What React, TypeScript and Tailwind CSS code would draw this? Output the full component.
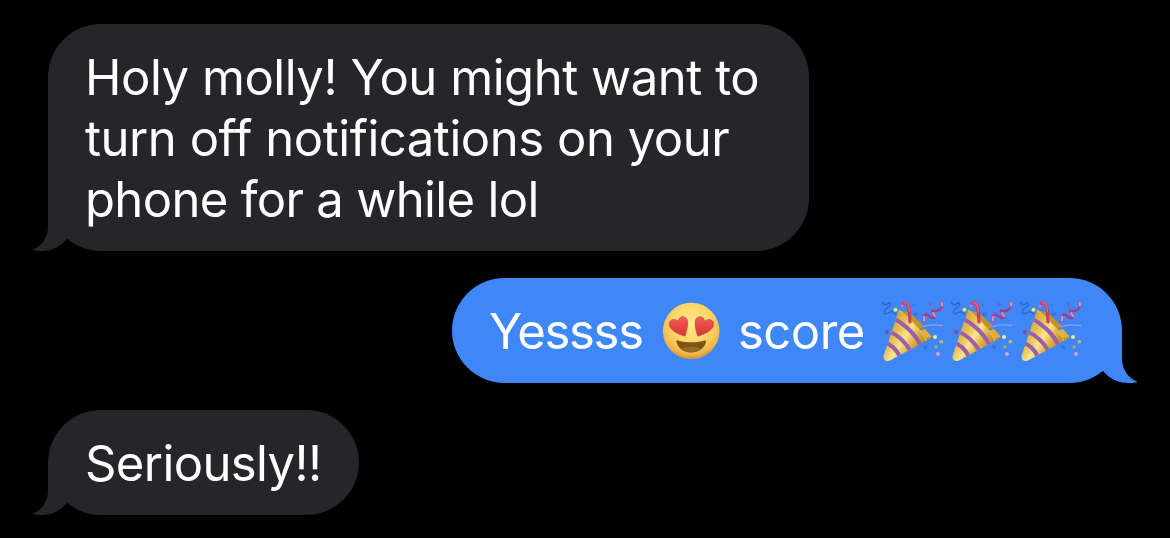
import type { ReactNode } from "react";
import clsx from "clsx";

function Tail({ className }: { className: string }) {
  return (
    <svg
      viewBox="0 0 36 54"
      className={clsx("absolute bottom-0 h-[54px] w-9 fill-current", className)}
    >
      <path d="M16 0V29C16 38 12.500 47.500 .5 52.900C4 54 10 54.200 16 53.400C24 52 30 47.500 35 42L36 0Z" />
    </svg>
  );
}

function HeartEyes() {
  return (
    <svg viewBox="0 0 58 58" className="h-[58px] w-[58px] shrink-0">
      <defs>
        <radialGradient id="face" cx="50%" cy="36%" r="65%">
          <stop offset="0" stopColor="#ffe98a" />
          <stop offset="0.55" stopColor="#fdd564" />
          <stop offset="0.86" stopColor="#f0b44a" />
          <stop offset="1" stopColor="#c48a3c" />
        </radialGradient>
        <linearGradient id="heart" x1="0" y1="0" x2="0" y2="1">
          <stop offset="0" stopColor="#f25f59" />
          <stop offset="1" stopColor="#d7322f" />
        </linearGradient>
      </defs>
      <circle cx="29.200" cy="29" r="28.300" fill="url(#face)" />
      <g fill="url(#heart)" stroke="#b9473a" strokeWidth="0.6">
        <path d="M23 34.200C18 32.800 8.800 29 7.300 23.500C5.800 18 12.500 15.500 16.300 19.500C16.300 13.500 24.500 12.800 25.500 19C26.200 24 24.500 30 23 34.200Z" />
        <path d="M35.800 34.200C40.800 32.800 50 29 51.500 23.500C53 18 46.300 15.500 42.500 19.500C42.500 13.500 34.300 12.800 33.300 19C32.600 24 34.300 30 35.800 34.200Z" />
      </g>
      <path
        d="M14.400 40C13.700 38 15.200 38.500 17.200 38.900C24.700 40.700 33.700 40.700 41.200 38.900C43.200 38.500 44.700 38 44 40C42.200 46.500 36.200 50.500 29.200 50.500S16.200 46.500 14.400 40Z"
        fill="#7c5517"
      />
      <path d="M20 47C25 44 33.500 44 38.500 47C33.500 51 25 51 20 47Z" fill="#946b25" />
    </svg>
  );
}

function PartyPopper() {
  return (
    <svg viewBox="0 0 66 66" className="h-[66px] w-[66px] shrink-0">
      <defs>
        <linearGradient id="cone" x1="6" y1="30" x2="40" y2="52" gradientUnits="userSpaceOnUse">
          <stop offset="0" stopColor="#cda23a" />
          <stop offset="0.3" stopColor="#e6c253" />
          <stop offset="0.52" stopColor="#fae58e" />
          <stop offset="0.75" stopColor="#dcae3e" />
          <stop offset="1" stopColor="#b98528" />
        </linearGradient>
        <clipPath id="coneClip">
          <path d="M19 12C27 18 41 31 46 43L10 62.500C7 64 3 62 3.500 58Z" />
        </clipPath>
      </defs>
      <path d="M19 12L30 15L44 28L38 33L45 31L51.500 38.500C51 41 48 42 45 43L30 36Z" fill="#c79129" />
      <path d="M38 33L45 31L51.500 38.500L46 40Z" fill="#e3ad3a" />
      <path d="M19 12C27 18 41 31 46 43L10 62.500C7 64 3 62 3.500 58Z" fill="url(#cone)" />
      <g clipPath="url(#coneClip)" fill="none" stroke="#9c5cb0" strokeWidth="4">
        <path d="M13 20C23 25 35 35 41 48" />
        <path d="M8 33C16 36 25 43 31 54" />
        <path d="M4 44C10 46 16 50 20 59" />
      </g>
      <path d="M19 12C27 18 41 31 46 43" fill="none" stroke="#edcb5b" strokeWidth="1" />
      <path d="M43 29C48 26.500 56 26.500 63 27.500" fill="none" stroke="#9a96ee" strokeWidth="1.300" />
      <g fill="none" strokeLinecap="round" strokeLinejoin="round">
        <path d="M23 5.200C27 4 29 8 29.300 12L30 24" stroke="#cb3c66" strokeWidth="3.200" />
        <path d="M24 4.800C28 4 29.300 9 29.500 14" stroke="#eb6477" strokeWidth="1.200" />
        <path
          d="M44 23V18C46 13 52 22 54 20C57 18 49 13 53 12.500C57 14 61 12 62 8L61.500 4"
          stroke="#a43e83"
          strokeWidth="2.400"
        />
        <path d="M44 22.500V19M55 18L53 15M62 7.500L61.700 4.500" stroke="#ee8cbc" strokeWidth="2" />
        <path
          d="M2.500 4C3 8 7 7 9 4.500M9 4.500C13 7 9 8 6 11C3 14 4 17 8 15C12 12.500 14 14 15.500 16"
          stroke="#3268ce"
          strokeWidth="1.500"
        />
        <circle cx="35.500" cy="16" r="1.500" stroke="#3369c7" />
        <circle cx="45" cy="49.500" r="1.400" stroke="#3369c7" />
        <path d="M33 6L34 8" stroke="#3369c7" />
      </g>
      <circle cx="15.500" cy="11.800" r="2" fill="#dce96c" />
      <circle cx="22" cy="8" r="1.500" fill="#cd76bd" />
      <circle cx="50.500" cy="6.300" r="1.600" fill="#a14e9e" />
      <circle cx="7" cy="34" r="1.900" fill="#8f4583" />
      <circle cx="55" cy="39" r="2" fill="#e3f09a" />
      <circle cx="61.300" cy="43.700" r="1.900" fill="#c9ad6b" />
      <circle cx="56" cy="49" r="1.700" fill="#bba46c" />
      <circle cx="58" cy="56" r="2" fill="#cda0dd" />
    </svg>
  );
}

function Bubble({ sent, className, children }: { sent?: boolean; className: string; children: ReactNode }) {
  return (
    <div
      className={clsx(
        "relative rounded-[53px]",
        sent ? "self-end bg-[#3f87f7]" : "self-start bg-[#26252a]",
        className
      )}
    >
      <Tail
        className={sent ? "-right-4 -scale-x-100 text-[#3f87f7]" : "-left-4 text-[#26252a]"}
      />
      <div className="relative">{children}</div>
    </div>
  );
}

export default function App() {
  return (
    <main className="flex h-[538px] w-[1170px] flex-col gap-[27px] overflow-hidden bg-black px-12 pt-6 font-['Inter',sans-serif] text-[49px] leading-[61px] whitespace-nowrap text-white">
      <Bubble className="h-[227px] w-[761px] pt-[23px] pl-[37px]">
        <p className="tracking-[-0.46px]">Holy molly! You might want to</p>
        <p className="tracking-[-0.46px]">turn off notifications on your</p>
        <p className="tracking-[-0.66px]">phone for a while lol</p>
      </Bubble>
      <Bubble sent className="h-[105px] w-[670px] pl-[37px]">
        <div className="flex h-[105px] items-center">
          <span className="w-[173px] pt-0.5 tracking-[-1.3px]">Yessss</span>
          <HeartEyes />
          <span className="w-[160px] pt-0.5 pl-[18px] tracking-[-0.5px]">score</span>
          <div className="flex gap-[3px]">
            <PartyPopper />
            <PartyPopper />
            <PartyPopper />
          </div>
        </div>
      </Bubble>
      <Bubble className="h-[105px] w-[311px] pt-[23px] pl-[37px]">
        <p className="tracking-[-0.6px]">Seriously!!</p>
      </Bubble>
    </main>
  );
}
